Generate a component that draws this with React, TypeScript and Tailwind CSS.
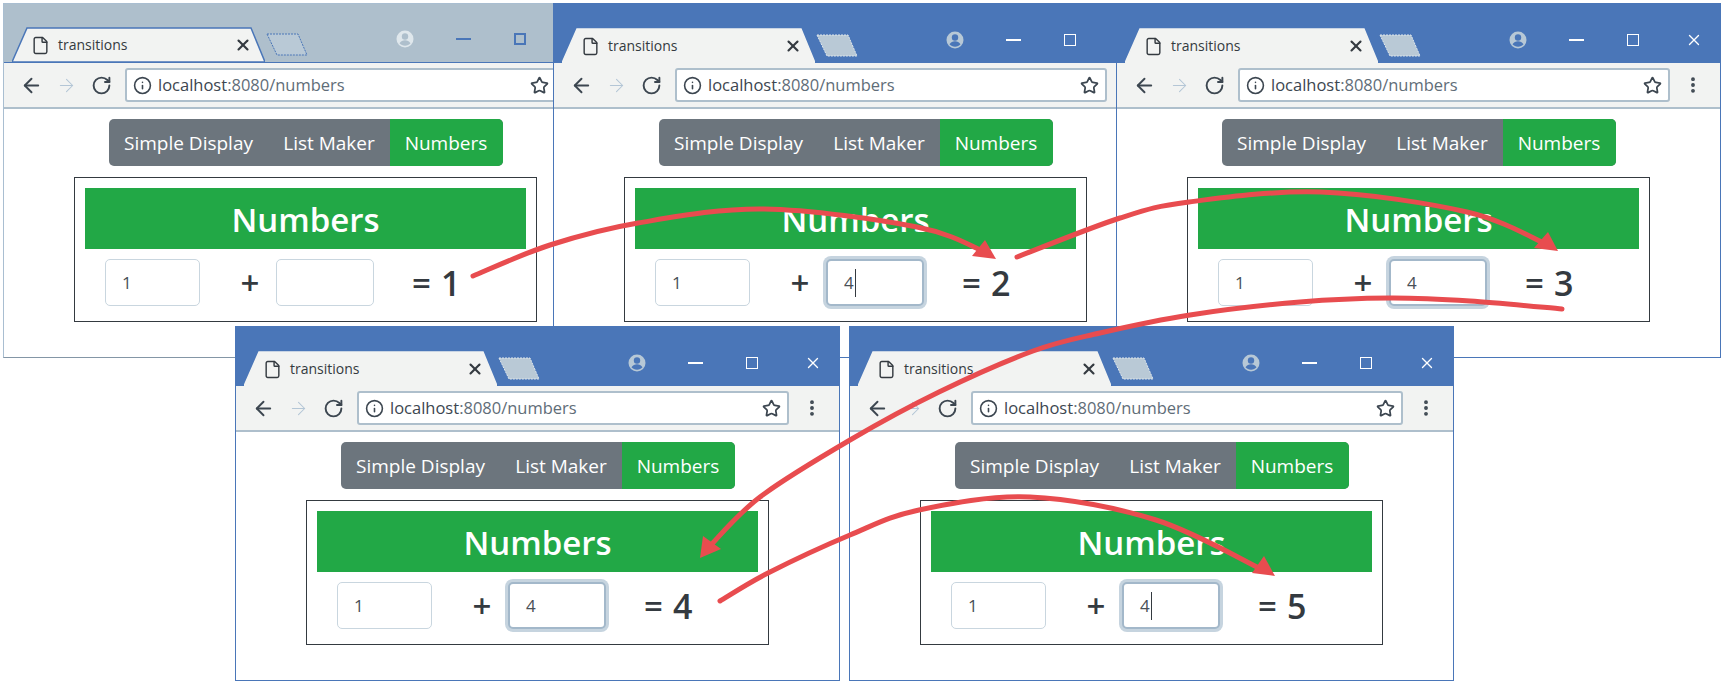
import { ArrowLeft, ArrowRight, EllipsisVertical, File, Info, RotateCw, Star, X } from 'lucide-react';

interface BrowserWindowProps {
    /** Position on the canvas, as Tailwind classes */
    position: string;
    /** Right hand field, empty when nothing was typed yet */
    value: string;
    result: number;
    focused?: boolean;
    caret?: boolean;
    /** Window without focus has a pale title bar */
    inactive?: boolean;
}

const WINDOWS: BrowserWindowProps[] = [
    { position: 'left-[3px] top-[3px] z-10', value: '', result: 1, inactive: true },
    { position: 'left-[553px] top-[3px] z-20', value: '4', result: 2, focused: true, caret: true },
    { position: 'left-[1116px] top-[3px] z-30', value: '4', result: 3, focused: true },
    { position: 'left-[235px] top-[326px] z-40', value: '4', result: 4, focused: true },
    { position: 'left-[849px] top-[326px] z-50', value: '4', result: 5, focused: true, caret: true },
];

// Each arrow: the curve it follows and the triangle at its end
const ARROWS = [
    {
        points: [[473, 276], [550, 245], [638, 223], [764, 209], [917, 227], [985, 252]],
        head: '996,259 972,256 985,240',
    },
    {
        points: [[1017, 257], [1120, 218], [1189, 202], [1321, 192], [1467, 212], [1546, 244]],
        head: '1558,251 1534,248 1548,232',
    },
    {
        points: [[1562, 309], [1470, 301], [1390, 298], [1300, 302], [1190, 315], [1100, 333], [1033, 351], [939, 392], [850, 440], [760, 497], [708, 548]],
        head: '700,558 703,536 721,549',
    },
    {
        points: [[720, 601], [768, 573], [850, 535], [919, 510], [1030, 497], [1156, 520], [1263, 570]],
        head: '1275,576 1252,573 1264,556',
    },
];

// Catmull-Rom through the points, written out as cubic beziers
function curvePath(points: number[][]): string {
    let d = `M${points[0][0]} ${points[0][1]}`;
    for (let i = 0; i < points.length - 1; i++) {
        const p0 = points[Math.max(i - 1, 0)];
        const p1 = points[i];
        const p2 = points[i + 1];
        const p3 = points[Math.min(i + 2, points.length - 1)];
        const c1x = p1[0] + (p2[0] - p0[0]) / 6;
        const c1y = p1[1] + (p2[1] - p0[1]) / 6;
        const c2x = p2[0] - (p3[0] - p1[0]) / 6;
        const c2y = p2[1] - (p3[1] - p1[1]) / 6;
        d += ` C${c1x} ${c1y} ${c2x} ${c2y} ${p2[0]} ${p2[1]}`;
    }
    return d;
}

function ProfileIcon({ inactive }: { inactive?: boolean }) {
    const fill = inactive ? '#dfe7ec' : '#b7c8d6';
    const cut = inactive ? '#aebfcc' : '#4a76b8';
    return (
        <svg width="18" height="18" viewBox="0 0 18 18">
            <circle cx="9" cy="9" r="8.5" fill={fill} />
            <circle cx="9" cy="6.5" r="3.2" fill={cut} />
            <path d="M3.5 13.2c1.2-2 3.300-3 5.500-3s4.300 1 5.500 3c-1.300 1.500-3.300 2.500-5.500 2.500s-4.200-1-5.500-2.500z" fill={cut} />
        </svg>
    );
}

function WindowControls({ inactive }: { inactive?: boolean }) {
    const color = inactive ? 'border-[#4a76b8]' : 'border-white';
    return (
        <div className="flex items-center pt-[12px] pr-[17px]">
            <div className="flex w-[60px] justify-start">
                <ProfileIcon inactive={inactive} />
            </div>
            <div className="flex w-[58px] justify-start">
                <div className={`w-[15px] border-t-2 ${color}`} />
            </div>
            <div className="flex w-[58px] justify-start">
                <div className={`h-[12px] w-[12px] ${inactive ? 'border-2' : 'border'} ${color}`} />
            </div>
            <X size={18} strokeWidth={1.8} className="text-white" />
        </div>
    );
}

function TabStrip({ inactive }: { inactive?: boolean }) {
    return (
        <div className="flex items-end self-end">
            <div className="relative ml-[8px] flex h-[35px] w-[253px] items-center pl-[19px] pr-[13px] pt-[1px] text-[#343a40]">
                <svg width="253" height="35" viewBox="0 0 253 35" className="absolute left-0 top-0">
                    <polygon
                        points="0,35 15,1 239,1 253,35"
                        fill="#f2f3f2"
                        stroke={inactive ? '#4a76b8' : '#f2f3f2'}
                        strokeWidth="1.500"
                    />
                </svg>
                <File size={19} strokeWidth={1.800} className="relative" />
                <span className="relative ml-[8px] flex-1 text-[14px] leading-none">transitions</span>
                <X size={18} strokeWidth={2.800} className="relative" />
            </div>
            <svg width="42" height="23" viewBox="0 0 42 23" className="mb-[6px] ml-[1px]">
                <polygon
                    points="1,1 32,1 41,22 11,22"
                    fill="#b9c9d6"
                    stroke={inactive ? '#4a76b8' : '#dfe7ec'}
                    strokeWidth="1"
                    strokeDasharray="2 1"
                />
            </svg>
        </div>
    );
}

function Toolbar() {
    return (
        <div className="flex h-[46px] items-center border-b-2 border-[#aebfcc] bg-[#f2f3f2] pl-[10px] text-[#3c4650]">
            <div className="flex w-[35px] justify-center">
                <ArrowLeft size={23} strokeWidth={2} />
            </div>
            <div className="flex w-[35px] justify-center text-[#b4c6d6]">
                <ArrowRight size={21} strokeWidth={1.200} />
            </div>
            <div className="flex w-[35px] justify-center">
                <RotateCw size={21} strokeWidth={2.200} />
            </div>
            <div className="ml-[6px] flex h-[34px] w-[432px] items-center rounded-[3px] border-2 border-[#aebfcc] bg-white pl-[6px] pr-[6px]">
                <Info size={19} strokeWidth={2} />
                <span className="ml-[6px] flex-1 text-[16.500px] leading-none">
                    localhost<span className="text-[#5f6d78]">:8080/numbers</span>
                </span>
                <Star size={19} strokeWidth={2.200} />
            </div>
            <div className="flex w-[46px] justify-center">
                <EllipsisVertical size={20} strokeWidth={2.600} />
            </div>
        </div>
    );
}

function NavButtons() {
    return (
        <div className="flex h-[47px] w-[394px] items-center overflow-hidden rounded-[5px] bg-[#6c757d] text-[19px] text-white">
            <div className="w-[160px] pt-[2px] text-center">Simple Display</div>
            <div className="w-[121px] pt-[2px] text-center">List Maker</div>
            <div className="flex h-full w-[113px] items-center justify-center bg-[#22a846] pt-[2px]">Numbers</div>
        </div>
    );
}

function NumberField({ value, focused, caret, className = '' }: { value: string; focused?: boolean; caret?: boolean; className?: string }) {
    const border = focused
        ? 'border-2 border-[#a3b8ca] ring-[3px] ring-[#c6d4df]'
        : 'border border-[#c9d6df]';
    return (
        <div className={`flex h-[47px] items-center rounded-[5px] bg-white pl-[16px] text-[17px] text-[#495057] ${border} ${className}`}>
            {value}
            {caret && <span className="ml-[1px] h-[28px] w-[1px] bg-[#343a40]" />}
        </div>
    );
}

function NumbersCard({ value, result, focused, caret }: BrowserWindowProps) {
    return (
        <div className="h-[145px] w-[463px] border border-[#343a40] p-[10px]">
            <h1 className="flex h-[61px] items-center justify-center bg-[#22a846] pt-[3px] text-[33px] font-semibold text-white">Numbers</h1>
            <div className="mt-[10px] flex items-center pl-[20px] text-[#343a40]">
                <NumberField value="1" className="w-[95px]" />
                <div className="w-[100px] text-center text-[33px] font-semibold leading-none">+</div>
                <NumberField value={value} focused={focused} caret={caret} className="-ml-[24px] w-[98px]" />
                <div className="ml-[38px] flex items-center text-[33px] font-semibold leading-none">
                    =<span className="ml-[10px] text-[34px]">{result}</span>
                </div>
            </div>
        </div>
    );
}

function BrowserWindow(props: BrowserWindowProps) {
    const { position, inactive } = props;
    return (
        <div className={`absolute flex h-[355px] w-[605px] flex-col border bg-white ${inactive ? 'border-[#a9bed1] border-b-[#8496a6]' : 'border-[#4a76b8]'} ${position}`}>
            <div className={`flex h-[59px] justify-between ${inactive ? 'border-b border-[#4a76b8] bg-[#aebfcc]' : 'bg-[#4a76b8]'}`}>
                <TabStrip inactive={inactive} />
                <WindowControls inactive={inactive} />
            </div>
            <Toolbar />
            <div className="flex flex-col items-center gap-[11px] pt-[10px]">
                <NavButtons />
                <NumbersCard {...props} />
            </div>
        </div>
    );
}

export default function App() {
    return (
        <div
            className="relative h-[684px] w-[1725px] overflow-hidden bg-white"
            style={{ fontFamily: '"Open Sans", "Noto Sans", sans-serif' }}
        >
            {WINDOWS.map((win) => (
                <BrowserWindow key={win.result} {...win} />
            ))}
            {/* Arrows run across the windows, so they sit above all of them */}
            <svg width="1725" height="684" viewBox="0 0 1725 684" className="absolute left-0 top-0 z-[60]">
                {ARROWS.map((arrow) => (
                    <g key={arrow.head} fill="#e84c4f">
                        <path d={curvePath(arrow.points)} fill="none" stroke="#e84c4f" strokeWidth="5" strokeLinecap="round" />
                        <polygon points={arrow.head} />
                    </g>
                ))}
            </svg>
        </div>
    );
}
